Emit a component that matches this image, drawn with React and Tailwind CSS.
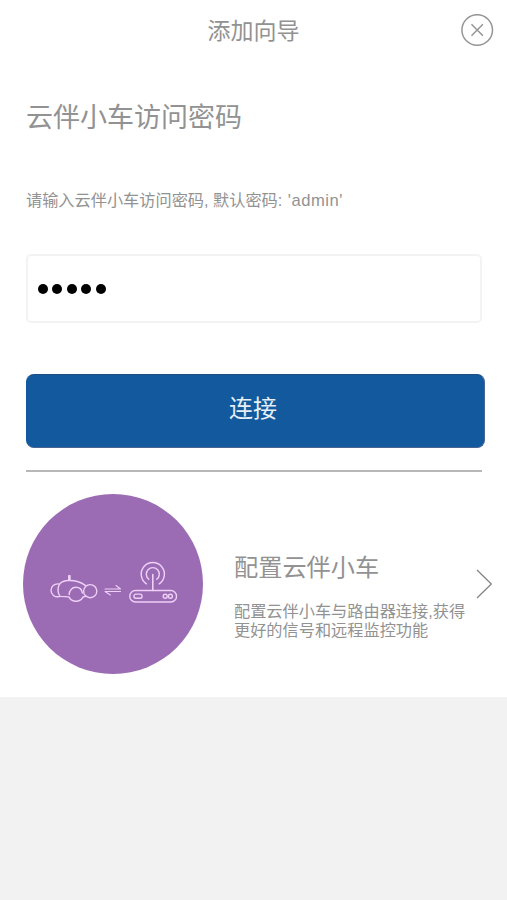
import React, { useState } from 'react';

const CarRouterIcon = () => (
    <svg className='w-[146px] h-[58px]' viewBox='0 0 146 58' fill='none' stroke='#eed0f8' strokeWidth='1.4' strokeLinecap='round' strokeLinejoin='round'>
        {/* car */}
        <path d='M18.6 28.9C14.2 28.4 11 31.6 11 35.3C11 39.6 14.6 42.6 19.4 41.6' />
        <path d='M45.3 30.4C40.5 26.7 34 25.2 27.8 25.5C23.4 25.8 20.4 27.2 19 30C17.6 33.6 17.8 38.3 20.2 41.4L28.9 41.9C30.3 44.8 33 46.3 36 46.3C39.2 46.3 41.8 44.6 43.2 41.9L46 41.3' />
        <path d='M29.2 39.6C29.2 35.6 32 32.3 35.8 32.3C39.2 32.3 41.8 34.4 42.4 38' />
        <circle cx='50.2' cy='36.2' r='6.6' />
        <path d='M28.7 25V20.7H30V25' />
        {/* arrows */}
        <path d='M65 34H80.5L76 30.5M80.5 36.5H65L70.4 40' strokeWidth='1.1' />
        {/* router */}
        <rect x='89.8' y='35.5' width='46.7' height='11.5' rx='5.6' />
        <rect x='94' y='39.1' width='8' height='4.2' rx='1.8' />
        <circle cx='125.2' cy='41.2' r='2' />
        <circle cx='130.4' cy='41.2' r='2' />
        <path d='M112.8 35.5V19.5' strokeWidth='1.6' />
        <path d='M108.8 24.2A6.5 6.5 0 1 1 116.8 24.2' />
        <path d='M106.4 28.8A11.6 11.6 0 1 1 119.2 28.8' />
    </svg>
)

export default function App() {
    const [password] = useState("admin");

    return (
        <div className="min-h-screen bg-[#f2f2f2] font-['Liberation_Sans','Noto_Sans_CJK_SC',sans-serif] font-normal text-[#929292]">
            <div className='h-[697px] bg-white'>
                <div className='flex h-[60px] items-center justify-between pr-[13px] pl-[46px]'>
                    <div className='flex-1 pt-[2px] text-center text-[23px] leading-[34px]'>添加向导</div>
                    <button aria-label='关闭'>
                        <svg className='h-[33px] w-[33px]' viewBox='0 0 33 33' fill='none' stroke='#969696' strokeWidth='1.5'>
                            <circle cx='16.2' cy='16' r='15.3' />
                            <path d='M10.5 10.3L21.9 21.7M21.9 10.3L10.5 21.7' />
                        </svg>
                    </button>
                </div>

                <div className='px-[26px]'>
                    <h1 className='pt-[38px] text-[27px] leading-[40px]'>云伴小车访问密码</h1>
                    <p className='mt-[50px] h-[24px] text-[16.2px] leading-[24px]'>请输入云伴小车访问密码, 默认密码: <span className='ml-[1px] text-[16.6px] tracking-[0.5px]'>'admin'</span></p>

                    <div className='mt-[42px] flex h-[69px] w-[456px] items-center gap-[4.5px] rounded-[5px] border-2 border-[#f3f3f3] pl-[9.5px]'>
                        {password.split("").map((item, index) => (
                            <span key={index} className='h-[10px] w-[10px] rounded-full bg-black'></span>
                        ))}
                    </div>

                    <button className='mt-[51px] block h-[74px] w-[459px] rounded-[8px] border border-t-[#1d4d82] border-r-[#4a6593] border-b-[#4a6593] border-l-[#12579b] bg-[#12599d] pr-[5px] pb-[4px] text-[24px] text-[#e6eef6]'>
                        连接
                    </button>
                    <div className='mt-[22px] h-[2px] w-[456px] bg-[#b8b8b8]'></div>
                </div>

                <div className='mt-[22px] flex items-center pl-[23px]'>
                    <div className='flex h-[180px] w-[180px] items-center justify-center rounded-full bg-[#9b6bb3]'>
                        <CarRouterIcon />
                    </div>
                    <div className='ml-[31px] w-[236px] pt-[22px]'>
                        <h2 className='text-[24.2px] leading-[36px]'>配置云伴小车</h2>
                        <p className='mt-[16px] text-[16.2px] leading-[19px] whitespace-nowrap'>
                            配置云伴小车与路由器连接,获得<br />更好的信号和远程监控功能
                        </p>
                    </div>
                    <svg className='ml-[6px] h-[30px] w-[17px]' viewBox='0 0 17 30' fill='none' stroke='#858585' strokeWidth='1.3'>
                        <path d='M1 1L15.3 15L1 29' />
                    </svg>
                </div>
            </div>
        </div>
    )
}
